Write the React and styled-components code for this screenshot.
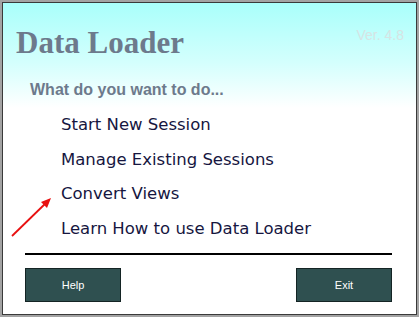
import React from 'react';
import styled, { createGlobalStyle } from 'styled-components';

const Global = createGlobalStyle`
  html, body { margin: 0; padding: 0; background: #ffffff; }
  body { width: 419px; height: 317px; overflow: hidden; }
`;

const Frame = styled.div`
  width: 419px;
  height: 317px;
  box-sizing: border-box;
  border: 2px solid #a3a3a3;
  background: #a3a3a3;
`;

const Panel = styled.div`
  box-sizing: border-box;
  height: 100%;
  border: 1px solid #3a3a3a;
  background: linear-gradient(to bottom, #a9fffb 0px, #d4fffd 60px, #ffffff 105px, #ffffff 100%);
  display: flex;
  flex-direction: column;
  padding: 0 24px 0 13px;
`;

const Header = styled.div`
  display: flex;
  justify-content: space-between;
  align-items: flex-start;
  padding-top: 22px;
`;

const Title = styled.h1`
  margin: 0;
  font-family: "Liberation Serif", serif;
  font-weight: bold;
  font-size: 31px;
  line-height: 36px;
  color: #6d7a8c;
`;

const Version = styled.span`
  font-family: "Liberation Sans", Arial, sans-serif;
  font-size: 14px;
  color: #d6e4e4;
  margin-top: 2px;
  margin-right: -12px;
`;

const Prompt = styled.div`
  font-family: "Liberation Sans", Arial, sans-serif;
  font-weight: bold;
  font-size: 16px;
  line-height: 18px;
  color: #6d7a8c;
  margin: 20px 0 0 14px;
`;

const Menu = styled.div`
  display: flex;
  flex-direction: column;
  gap: 14.7px;
  margin: 16px 0 0 45px;
`;

const Item = styled.div`
  font-family: "DejaVu Sans", Verdana, sans-serif;
  font-size: 16.5px;
  line-height: 20px;
  color: #16163f;
  position: relative;
`;

const Arrow = styled.svg`
  position: absolute;
  left: -50px;
  top: 12px;
  overflow: visible;
`;

const Rule = styled.div`
  height: 1.5px;
  background: #000;
  margin: 14px 0 0 9px;
`;

const Buttons = styled.div`
  display: flex;
  justify-content: space-between;
  margin: 13px 0 0 9px;
`;

const Button = styled.button`
  width: 96px;
  height: 34px;
  background: #2f5050;
  border: 1px solid #142424;
  color: #ffffff;
  font-family: "Liberation Sans", Arial, sans-serif;
  font-size: 11px;
  padding: 0;
`;

export default function App() {
  return (
    <Frame>
      <Global />
      <Panel>
        <Header>
          <Title>Data Loader</Title>
          <Version>Ver. 4.8</Version>
        </Header>
        <Prompt>What do you want to do...</Prompt>
        <Menu>
          <Item>Start New Session</Item>
          <Item>Manage Existing Sessions</Item>
          <Item>
            <Arrow width="42" height="42" viewBox="0 0 42 42">
              <line x1="1" y1="40" x2="37" y2="5" stroke="#e81010" strokeWidth="1.8" />
              <path d="M40 2 L30 6 L36 12 Z" fill="#e81010" />
            </Arrow>
            Convert Views
          </Item>
          <Item>Learn How to use Data Loader</Item>
        </Menu>
        <Rule />
        <Buttons>
          <Button>Help</Button>
          <Button>Exit</Button>
        </Buttons>
      </Panel>
    </Frame>
  );
}
